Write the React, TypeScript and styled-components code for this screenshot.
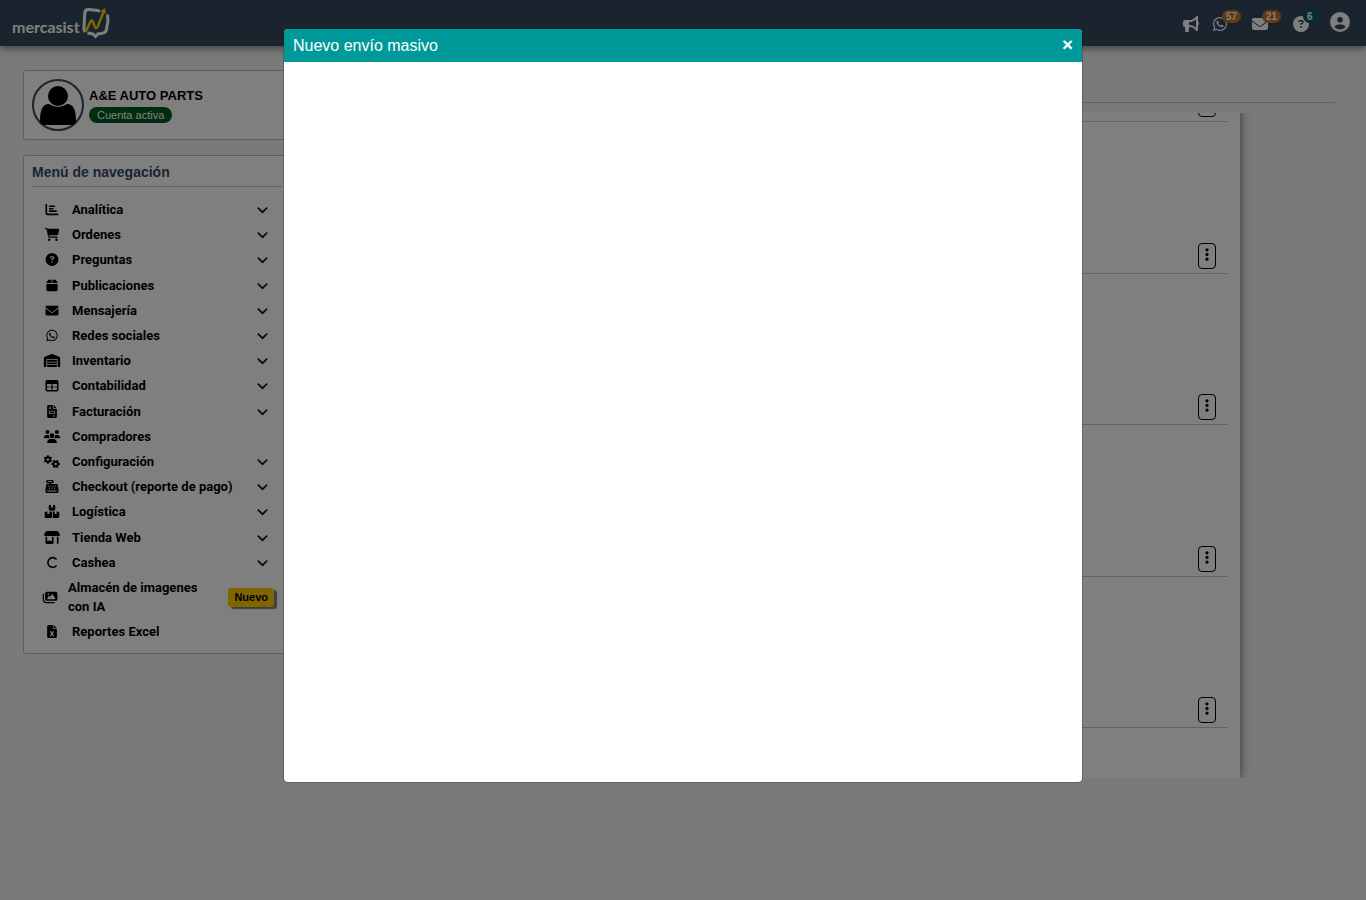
import React from "react";
import styled, { createGlobalStyle } from "styled-components";
import {
  FaBullhorn, FaWhatsapp, FaEnvelope, FaCircleQuestion, FaCircleUser, FaChartBar, FaCartShopping,
  FaBox, FaWarehouse, FaFileInvoice, FaUsers, FaGears, FaCashRegister, FaBoxesStacked,
  FaShop, FaC, FaImages, FaFileExcel, FaChevronDown, FaEllipsisVertical,
} from "react-icons/fa6";

const GlobalStyle = createGlobalStyle`
  *, *::before, *::after { box-sizing: border-box; }
  body {
    margin: 0;
    background: #f4f4f4;
    color: #000;
    font-family: "Liberation Sans", Arial, sans-serif;
    font-size: 14px;
    overflow: hidden;
  }
  button { font: inherit; color: inherit; cursor: pointer; }
  a { color: inherit; text-decoration: none; }
`;

const Page = styled.div`
  min-height: 100vh;
`;

const Navbar = styled.header`
  display: flex;
  justify-content: space-between;
  align-items: center;
  height: 46px;
  padding: 0 16px 0 12px;
  background: #34495e;
  color: #fff;
  box-shadow: 0 2px 8px rgba(0, 0, 0, 0.5);
`;

const Brand = styled.a`
  display: flex;
  align-items: center;
`;

const BrandName = styled.span`
  padding-top: 8px;
  font-family: Lato, sans-serif;
  font-weight: 700;
  font-size: 16px;
  line-height: 20px;
`;

const Tools = styled.nav`
  display: flex;
  align-items: flex-end;
  padding-bottom: 2px;
`;

const Tool = styled.button<{ $gap?: number; $size?: number }>`
  position: relative;
  display: flex;
  margin: 0 ${(p) => p.$gap ?? 0}px 0 0;
  padding: 0;
  border: 0;
  background: none;
  font-size: ${(p) => p.$size ?? 16}px;
`;

const Count = styled.span<{ $color: string }>`
  position: absolute;
  left: calc(100% - 6px);
  top: -6px;
  padding: 0 4px;
  border-radius: 7px;
  background: ${(p) => p.$color};
  font-weight: 700;
  font-size: 10px;
  line-height: 13px;
`;

const Layout = styled.div`
  display: flex;
  align-items: flex-start;
  gap: 16px;
  padding: 24px 31px 0 23px;
`;

const Sidebar = styled.aside`
  display: flex;
  flex-direction: column;
  gap: 15px;
  flex: 0 0 268px;
`;

const Card = styled.section`
  padding: 8px;
  border: 1px solid #bdbdbd;
  border-radius: 2px;
  background: #fff;
`;

const AccountCard = styled(Card)`
  display: flex;
  align-items: center;
  gap: 5px;
`;

const Avatar = styled.svg`
  width: 52px;
  height: 52px;
`;

const AccountName = styled.h2`
  margin: 0 0 3px;
  font-size: 13px;
  line-height: 16px;
`;

const Status = styled.span`
  display: block;
  width: fit-content;
  padding: 0 8px;
  border-radius: 8px;
  background: #005a1e;
  color: #fff;
  font-size: 11px;
  line-height: 16px;
`;

const MenuTitle = styled.h3`
  margin: 0 0 10px;
  padding-bottom: 6px;
  border-bottom: 1px solid #c4c4c4;
  color: #34495e;
  font-size: 14px;
  line-height: 16px;
`;

const MenuList = styled.ul`
  display: grid;
  grid-auto-rows: 1fr;
  min-height: 378px;
  margin: 0;
  padding: 0;
  list-style: none;
`;

const ExtraList = styled(MenuList)`
  grid-auto-rows: auto;
  min-height: 0;
  padding-bottom: 1px;
`;

const MenuLink = styled.a<{ $wide?: boolean }>`
  display: grid;
  grid-template-columns: ${(p) => (p.$wide ? "16px 140px 1fr" : "20px 1fr 16px")};
  column-gap: 10px;
  align-items: center;
  height: 100%;
  min-height: 25px;
  padding: ${(p) => (p.$wide ? "3px 8px 3px 10px" : "0 12px 0 10px")};
  font-family: Roboto, sans-serif;
  font-weight: 700;
  font-size: 13px;
  line-height: 19px;
`;

const MenuIcon = styled.span`
  display: flex;
  justify-content: center;

  svg {
    flex: none;
    width: 18px;
    height: 13px;
  }
`;

const Arrow = styled.span`
  display: flex;
  justify-content: center;
  font-size: 11px;

  svg {
    stroke-width: 20px;
  }
`;

const NewTag = styled.span`
  justify-self: end;
  padding: 0 6px;
  border-radius: 3px;
  background: #ffcc00;
  box-shadow: 3px 2px 1px rgba(0, 0, 0, 0.5);
  font-family: "Liberation Sans", Arial, sans-serif;
  font-size: 11px;
  line-height: 19px;
`;

const Main = styled.main`
  flex: 1;
  min-width: 0;
`;

const PageHead = styled.div`
  height: 33px;
  margin-bottom: 10px;
  border-bottom: 1px solid #c4c4c4;
`;

const Scroller = styled.div`
  display: flex;
  flex-direction: column;
  justify-content: flex-end;
  height: calc(100vh - 235px);
  margin-right: 80px;
  padding-right: 15px;
  overflow: hidden;
`;

const Shipments = styled.ul`
  display: grid;
  grid-auto-rows: 1fr;
  flex: none;
  min-height: 807px;
  margin: 0;
  padding: 0 12px 50px;
  background: #fff;
  box-shadow: 0 0 10px rgba(0, 0, 0, 0.6);
  list-style: none;
`;

const Shipment = styled.li`
  display: flex;
  justify-content: flex-end;
  align-items: flex-end;
  padding: 0 12px 4px;
  border-bottom: 1px solid #c4c4c4;
`;

const RowMenu = styled.button`
  display: flex;
  justify-content: center;
  width: 18px;
  height: 26px;
  padding: 3px 0 0;
  border: 1px solid #000;
  border-radius: 4px;
  background: none;

  svg {
    flex: none;
    width: 16px;
    height: 15px;
  }
`;

const Backdrop = styled.div`
  position: fixed;
  inset: 0;
  padding: 28px;
  background: rgba(0, 0, 0, 0.5);
`;

const Dialog = styled.section`
  width: 100%;
  max-width: 800px;
  margin: 0 auto;
  border: 1px solid rgba(0, 0, 0, 0.2);
  border-radius: 5px;
  background: #fff;
  background-clip: padding-box;
  overflow: hidden;
`;

const DialogHead = styled.header`
  display: flex;
  justify-content: space-between;
  align-items: center;
  height: 33px;
  padding: 0 9px;
  background: #009999;
  color: #fff;
`;

const DialogTitle = styled.h1`
  margin: 0;
  font-weight: 400;
  font-size: 16px;
  line-height: 24px;
`;

const Close = styled.button`
  padding: 0 0 2px;
  border: 0;
  background: none;
  font-weight: 700;
  font-size: 19px;
  line-height: 20px;
`;

const DialogBody = styled.div`
  height: 80vh;
`;

const LedgerIcon = () => (
  <svg viewBox="0 0 13 13" fill="none" aria-hidden="true">
    <rect x="0.800" y="1.800" width="11.400" height="10" rx="1" stroke="currentColor" strokeWidth="1.600" />
    <path d="M1 3.500 H12" stroke="currentColor" strokeWidth="3" />
    <path d="M6.500 4 V11" stroke="currentColor" strokeWidth="1.200" />
    <path d="M1 8 H12" stroke="currentColor" strokeWidth="0.600" />
  </svg>
);

type Item = { label: string; icon: React.ComponentType; leaf?: boolean };

const items: Item[] = [
  { label: "Analítica", icon: FaChartBar },
  { label: "Ordenes", icon: FaCartShopping },
  { label: "Preguntas", icon: FaCircleQuestion },
  { label: "Publicaciones", icon: FaBox },
  { label: "Mensajería", icon: FaEnvelope },
  { label: "Redes sociales", icon: FaWhatsapp },
  { label: "Inventario", icon: FaWarehouse },
  { label: "Contabilidad", icon: LedgerIcon },
  { label: "Facturación", icon: FaFileInvoice },
  { label: "Compradores", icon: FaUsers, leaf: true },
  { label: "Configuración", icon: FaGears },
  { label: "Checkout (reporte de pago)", icon: FaCashRegister },
  { label: "Logística", icon: FaBoxesStacked },
  { label: "Tienda Web", icon: FaShop },
  { label: "Cashea", icon: FaC },
];

const MenuItem = ({ label, icon: Icon, leaf }: Item) => (
  <li>
    <MenuLink href="#">
      <MenuIcon><Icon /></MenuIcon>
      <span>{label}</span>
      {!leaf && <Arrow><FaChevronDown /></Arrow>}
    </MenuLink>
  </li>
);

const BrandMark = () => (
  <svg width="30" height="32" viewBox="0 0 30 32" fill="none" aria-hidden="true">
    <path d="M20 4.500 L18 3.500 L9 2.500 Q5 2.200 4.800 6 L4 20 Q3.500 23 5 25" stroke="#fff" strokeWidth="3" />
    <path d="M27.500 7.500 L28 14 L26.500 22 Q26 26 22 26.300 L18 27 L15.500 29.500 L13 27 L7.500 26" stroke="#fff" strokeWidth="3" />
    <path d="M5.500 25 L10.500 14.500 Q12 12 13 15 L15 20 Q16 22 17.500 20 L23.500 5" stroke="#ffd400" strokeWidth="2.400" />
    <path d="M20.500 4.500 L25 1 L26 7 Z" fill="#ffd400" />
  </svg>
);

export default function App() {
  return (
    <>
      <GlobalStyle />
      <Page>
        <Navbar>
          <Brand href="#" aria-label="mercasist">
            <BrandName>mercasist</BrandName>
            <BrandMark />
          </Brand>
          <Tools>
            <Tool $gap={13} aria-label="Anuncios"><FaBullhorn /></Tool>
            <Tool $gap={24} aria-label="WhatsApp"><FaWhatsapp /><Count $color="#c87020">57</Count></Tool>
            <Tool $gap={25} aria-label="Mensajes"><FaEnvelope /><Count $color="#c87020">21</Count></Tool>
            <Tool $gap={21} aria-label="Preguntas"><FaCircleQuestion /><Count $color="#006068">6</Count></Tool>
            <Tool $size={20} aria-label="Perfil"><FaCircleUser /></Tool>
          </Tools>
        </Navbar>
        <Layout>
          <Sidebar>
            <AccountCard>
              <Avatar viewBox="0 0 52 52" aria-hidden="true">
                <circle cx="26" cy="26" r="25" fill="#fff" stroke="#34495e" strokeWidth="2" />
                <circle cx="26" cy="17" r="10" />
                <path d="M8 42 C8 32 10 25 17 25 Q26 31 35 25 C42 25 44 32 44 42 Q44 46 39 46 H13 Q8 46 8 42 Z" />
              </Avatar>
              <div>
                <AccountName>A&amp;E AUTO PARTS</AccountName>
                <Status>Cuenta activa</Status>
              </div>
            </AccountCard>
            <Card>
              <MenuTitle>Menú de navegación</MenuTitle>
              <MenuList>
                {items.map((item) => <MenuItem key={item.label} {...item} />)}
              </MenuList>
              <ExtraList>
                <li>
                  <MenuLink href="#" $wide>
                    <MenuIcon><FaImages /></MenuIcon>
                    <span>Almacén de imagenes con IA</span>
                    <NewTag>Nuevo</NewTag>
                  </MenuLink>
                </li>
                <MenuItem label="Reportes Excel" icon={FaFileExcel} leaf />
              </ExtraList>
            </Card>
          </Sidebar>
          <Main>
            <PageHead />
            <Scroller>
              <Shipments>
                {[1, 2, 3, 4, 5].map((n) => (
                  <Shipment key={n}>
                    <RowMenu aria-label="Opciones"><FaEllipsisVertical /></RowMenu>
                  </Shipment>
                ))}
              </Shipments>
            </Scroller>
          </Main>
        </Layout>
      </Page>
      <Backdrop>
        <Dialog role="dialog" aria-modal="true" aria-labelledby="dialog-title">
          <DialogHead>
            <DialogTitle id="dialog-title">Nuevo envío masivo</DialogTitle>
            <Close aria-label="Cerrar">×</Close>
          </DialogHead>
          <DialogBody />
        </Dialog>
      </Backdrop>
    </>
  );
}
